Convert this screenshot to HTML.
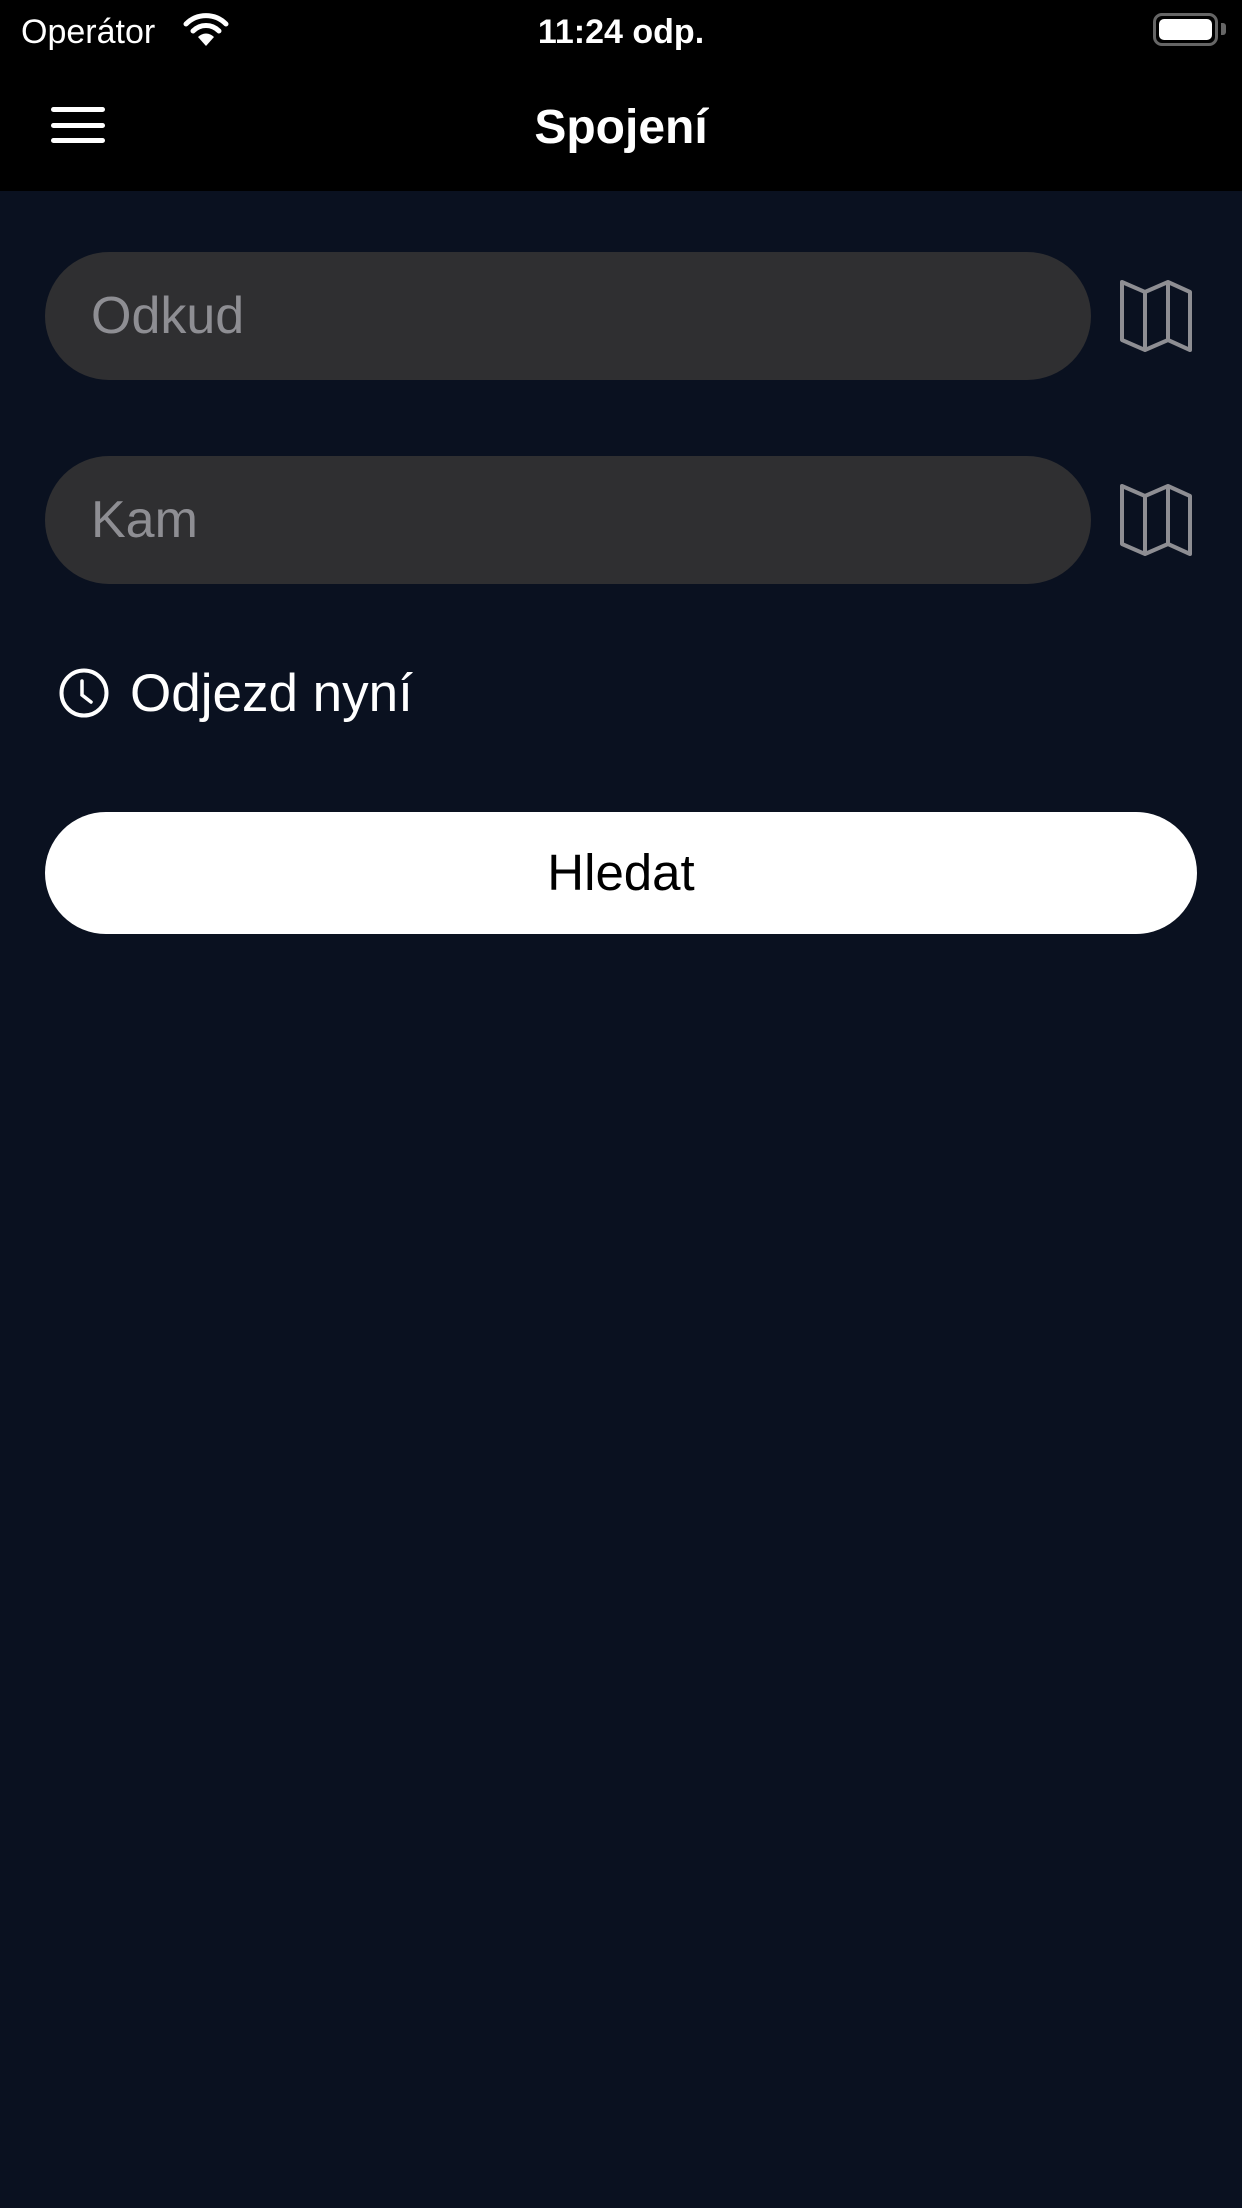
<!DOCTYPE html>
<html><head><meta charset="utf-8"><style>
*{margin:0;padding:0;box-sizing:border-box}
body{width:1242px;height:2208px;background:#0a1120;font-family:"Liberation Sans",sans-serif;position:relative;overflow:hidden;color:#fff}
.top{position:absolute;left:0;top:0;width:1242px;height:191px;background:#000}
.abs{position:absolute;white-space:nowrap}
.field{position:absolute;left:45px;width:1046px;height:128px;border-radius:64px;background:#2f2f31}
.ph{position:absolute;left:46px;top:0;line-height:128px;font-size:52px;color:#8e8e93}
</style></head><body>
<div class="top"></div>
<div class="abs" style="left:21px;top:10px;font-size:34px;line-height:44px">Operátor</div>
<svg class="abs" style="left:182px;top:12px" width="48" height="36" viewBox="0 0 48 36">
<path d="M4 12 A28 28 0 0 1 44 12" stroke="#fff" stroke-width="5" fill="none" stroke-linecap="round"/>
<path d="M11 19 A18 18 0 0 1 37 19" stroke="#fff" stroke-width="5" fill="none" stroke-linecap="round"/>
<path d="M24 34 L16 25 A11 11 0 0 1 32 25 Z" fill="#fff"/>
</svg>
<div class="abs" style="left:0;width:1242px;text-align:center;top:10px;font-size:34px;line-height:44px;font-weight:bold">11:24 odp.</div>
<div class="abs" style="left:1153px;top:13px;width:65px;height:33px;border:3px solid #666;border-radius:9px"></div>
<div class="abs" style="left:1159px;top:19px;width:53px;height:21px;background:#fff;border-radius:5px"></div>
<div class="abs" style="left:1221px;top:23px;width:5px;height:12px;background:#666;border-radius:0 3px 3px 0"></div>
<div class="abs" style="left:51px;top:107px;width:54px;height:5px;background:#fff;border-radius:3px"></div>
<div class="abs" style="left:51px;top:123px;width:54px;height:5px;background:#fff;border-radius:3px"></div>
<div class="abs" style="left:51px;top:138px;width:54px;height:5px;background:#fff;border-radius:3px"></div>
<div class="abs" style="left:0;width:1242px;text-align:center;top:100px;font-size:48px;line-height:56px;font-weight:bold">Spojení</div>

<div class="field" style="top:252px"><div class="ph">Odkud</div></div>
<div class="field" style="top:456px"><div class="ph">Kam</div></div>
<svg class="abs" style="left:1100px;top:260px" width="120" height="110">
<path d="M22 22 L45 32 L68 22 L90 32 L90 90 L68 80 L45 90 L22 80 Z M45 32 L45 90 M68 22 L68 80" stroke="#8e8e93" stroke-width="4" fill="none" stroke-linejoin="round"/>
</svg>
<svg class="abs" style="left:1100px;top:464px" width="120" height="110">
<path d="M22 22 L45 32 L68 22 L90 32 L90 90 L68 80 L45 90 L22 80 Z M45 32 L45 90 M68 22 L68 80" stroke="#8e8e93" stroke-width="4" fill="none" stroke-linejoin="round"/>
</svg>

<svg class="abs" style="left:58px;top:667px" width="52" height="52">
<circle cx="26" cy="26" r="22.5" stroke="#fff" stroke-width="4" fill="none"/>
<path d="M24 14 L24 28 L33 35" stroke="#fff" stroke-width="3.5" fill="none" stroke-linecap="round"/>
</svg>
<div class="abs" style="left:130px;top:664px;font-size:53px;line-height:60px">Odjezd nyní</div>

<div class="abs" style="left:45px;top:812px;width:1152px;height:122px;border-radius:61px;background:#fff;color:#000;text-align:center;line-height:122px;font-size:51px">Hledat</div>
</body></html>
